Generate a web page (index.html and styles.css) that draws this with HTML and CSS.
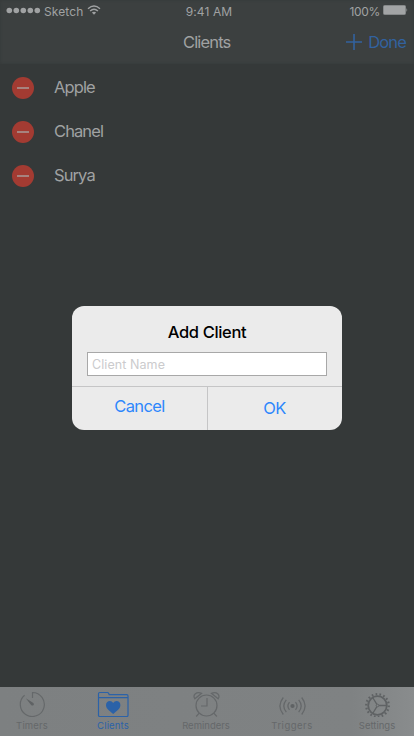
FILE: index.html
```
<!DOCTYPE html>
<html lang="en">
<head>
<meta charset="utf-8">
<title>Clients</title>
<link rel="stylesheet" href="styles.css">
</head>
<body>
<div class="screen">
  <header class="header">
    <div class="status">
      <div class="carrier">
        <svg class="dots" width="36" height="8" viewBox="0 0 36 8"><circle cx="3.300" cy="3.500" r="2.800"/><circle cx="10.300" cy="3.500" r="2.800"/><circle cx="17.300" cy="3.500" r="2.800"/><circle cx="24.300" cy="3.500" r="2.800"/><circle cx="31.300" cy="3.500" r="2.800"/></svg>
        <span class="network">Sketch</span>
        <svg class="wifi" width="14" height="10" viewBox="0 0 14 10"><path d="M1 3.8Q7-1.6 13 3.8M3.1 6Q7 2.5 10.900 6" fill="none" stroke="#a0a2a3" stroke-width="1.4"/><path d="M4.900 7.600Q7 5.800 9.100 7.600L7 9.700Z" fill="#a0a2a3"/></svg>
      </div>
      <span class="time">9:41 AM</span>
      <div class="power">
        <span class="percent">100%</span>
        <svg width="25" height="10" viewBox="0 0 25 10"><rect x=".5" y=".5" width="22" height="9" rx="1" fill="#a2a4a5" stroke="#858889"/><path d="M23.500 3q1.500 2 0 4z" fill="#a2a4a5"/></svg>
      </div>
    </div>
    <div class="nav">
      <h1>Clients</h1>
      <div class="done">
        <svg width="16" height="16" viewBox="0 0 16 16"><path d="M8 0v16M0 8h16" stroke="#32629f" stroke-width="1.600"/></svg>
        <span>Done</span>
      </div>
    </div>
  </header>
  <ul class="list">
    <li><i class="remove"></i><span>Apple</span></li>
    <li><i class="remove"></i><span>Chanel</span></li>
    <li><i class="remove"></i><span>Surya</span></li>
  </ul>
  <nav class="tabs">
    <div class="tab">
      <svg width="34" height="30" viewBox="0 0 34 30"><path d="M17.500 11V5.500A12 12 0 1 1 9.600 8.300" fill="none" stroke="#65686a" stroke-width="1.200"/><path d="M10.800 11.200l7.600 4.700q1.100 1.400 0 2.300t-2.300-.3z" fill="#5f6264"/></svg>
      <span class="spaced">Timers</span>
    </div>
    <div class="tab active">
      <svg width="34" height="30" viewBox="0 0 34 30"><path d="M2.500 29V6.800q0-1.300 1.300-1.300h7.500q1 0 1.400 1l.5 1.200H30.700q1.300 0 1.300 1.300V28.200q0 1.300-1.300 1.300H3.800q-1.300 0-1.300-1.300M2.500 10.600H32" fill="none" stroke="#2b62a8" stroke-width="1.200"/><path d="M17.200 27C13 23.500 10 21.500 10 18c0-4.600 5.500-5.400 7.200-2 1.700-3.400 7.200-2.600 7.200 2 0 3.500-3 5.500-7.200 9z" fill="#2b62a8"/></svg>
      <span class="spaced">Clients</span>
    </div>
    <div class="tab">
      <svg width="34" height="30" viewBox="0 0 34 30"><g fill="none" stroke="#65686a" stroke-width="1.200"><circle cx="17.500" cy="18.500" r="10.500"/><path d="M18 11v8h-6M10.200 26.200l-3 3.300M24.800 26.200l3 3.300M5.800 11.800C3.300 7.800 7.500 4 12.600 6.300zM29.200 11.800c2.500-4-1.700-7.800-6.800-5.500z"/></g></svg>
      <span>Reminders</span>
    </div>
    <div class="tab">
      <svg width="34" height="30" viewBox="0 0 34 30"><circle cx="17.500" cy="19" r="2.100" fill="#5f6264"/><g fill="none" stroke="#65686a" stroke-width="1.300"><path d="M14.500 15.200q-3.200 3.800 0 7.600M20.500 15.200q3.200 3.800 0 7.600M11.300 12.900q-5 6.100 0 12.200M23.700 12.900q5 6.100 0 12.200M8.300 10.500q-6.800 8.500 0 17M26.700 10.500q6.800 8.500 0 17"/></g></svg>
      <span class="wide">Triggers</span>
    </div>
    <div class="tab">
      <svg width="34" height="30" viewBox="0 0 34 30"><g fill="none" stroke="#5f6264"><circle cx="17.500" cy="18.500" r="9.300" stroke-width="1.800"/><circle cx="17.500" cy="18.500" r="11.300" stroke-width="2.200" pathLength="72" stroke-dasharray="1.700 2.300"/><circle cx="17.500" cy="18.500" r="1.300" stroke-width="1"/><path d="M19 18.500h7.500M16.700 17.200L12.700 10.500M16.700 19.800L12.700 26.500" stroke-width="1.300"/></g></svg>
      <span>Settings</span>
    </div>
  </nav>
  <section class="dialog">
    <h2>Add Client</h2>
    <input type="text" placeholder="Client Name" aria-label="Client Name">
    <div class="actions">
      <button class="cancel" type="button">Cancel</button>
      <button class="ok" type="button">OK</button>
    </div>
  </section>
</div>
</body>
</html>
```

FILE: styles.css
```
* { box-sizing: border-box; }
body { margin: 0; font-family: Inter, "Liberation Sans", sans-serif; }
h1, h2, ul { margin: 0; padding: 0; font-weight: 400; }
svg { display: block; flex: none; }
.screen {
  position: relative;
  width: 414px;
  height: 736px;
  overflow: hidden;
  display: flex;
  flex-direction: column;
  background: #353939;
}
.header {
  height: 64px;
  background: #3c4040;
  color: #a0a2a3;
  box-shadow: inset 0 0 3px #353939;
}
.status {
  display: grid;
  grid-template-columns: 1fr auto 1fr;
  height: 22px;
  padding: 0 6px;
  font-size: 12px;
  line-height: 24px;
}
.carrier { display: flex; align-items: flex-start; }
.dots { margin: 7px 2px 0 0; fill: #a0a2a3; }
.network { width: 43px; letter-spacing: .1px; white-space: nowrap; }
.wifi { margin-top: 5px; }
.time { letter-spacing: .1px; margin-left: 4px; }
.power { display: flex; justify-content: flex-end; gap: 3px; }
.power svg { margin-top: 5px; }
.percent { letter-spacing: -.35px; }
.nav {
  display: grid;
  grid-template-columns: 183px 1fr auto;
  height: 42px;
  padding-right: 8px;
  line-height: 41px;
  font-size: 16.5px;
  letter-spacing: -.85px;
}
.nav h1 { grid-column: 2; font-size: 16.5px; }
.done { display: flex; gap: 6px; color: #32629f; }
.done svg { margin-top: 12px; }
.list { flex: 1; padding: 2px 12px; list-style: none; }
.list li {
  display: flex;
  align-items: center;
  gap: 20px;
  height: 44px;
  color: #a0a2a3;
  font-size: 16.5px;
  letter-spacing: -.9px;
}
.list span { padding-bottom: 2px; }
.remove {
  display: flex;
  align-items: center;
  justify-content: center;
  width: 22px;
  height: 22px;
  border-radius: 50%;
  background: #a33b32;
}
.remove::before { content: ""; width: 12px; height: 2px; background: #a7837f; }
.tabs {
  display: grid;
  grid-template-columns: 64px 98px 88px 84px 86px;
  height: 49px;
  background: linear-gradient(90deg, #7d8081, #7f8283 85%, #898c8d);
  color: #65686a;
}
.tab { display: flex; flex-direction: column; align-items: center; font-size: 9.5px; line-height: 12px; }
.tab svg { margin-bottom: 3px; }
.spaced { letter-spacing: .15px; }
.wide { letter-spacing: .5px; }
.active { color: #2b62a8; }
.dialog {
  position: absolute;
  left: 72px;
  top: 306px;
  width: 270px;
  height: 124px;
  border-radius: 12px;
  background: #ebebeb;
  display: flex;
  flex-direction: column;
  overflow: hidden;
}
.dialog h2 { height: 46px; line-height: 53px; text-align: center; font-size: 16.5px; font-weight: 500; letter-spacing: -.35px; }
.dialog input {
  width: 240px;
  height: 24px;
  margin: 0 15px 10px;
  padding: 0 4px;
  border: 1px solid #a8a8a8;
  border-radius: 0;
  background: #fff;
  font: 12.5px Inter, sans-serif;
  letter-spacing: .08px;
}
.dialog input::placeholder { color: #cbcbcd; }
.actions { display: grid; grid-template-columns: 136px 134px; flex: 1; border-top: 1px solid #c5c5c6; }
.actions button { padding: 0; border: 0; background: none; color: #2d87fc; font: 16.5px Inter, sans-serif; letter-spacing: -.6px; }
.actions .cancel { border-right: 1px solid #c5c5c6; padding-bottom: 5px; }
.actions .ok { padding: 0 1px 1px 0; }
```
